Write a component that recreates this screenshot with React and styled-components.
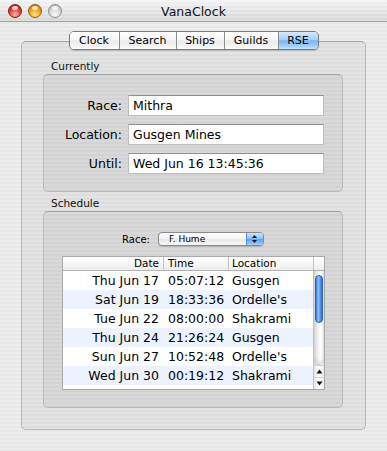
import React from 'react';
import styled, { createGlobalStyle } from 'styled-components';

const GlobalStyle = createGlobalStyle`
  body {
    margin: 0;
    font-family: "DejaVu Sans", "Lucida Grande", sans-serif;
  }
`;

const stripes = 'repeating-linear-gradient(180deg, #eeeeee 0px, #eeeeee 2px, #e7e7e7 2px, #e7e7e7 4px)';

// last row only shows a sliver at the bottom, so it stays empty
const rows = [
    ['Thu Jun 17', '05:07:12', 'Gusgen'],
    ['Sat Jun 19', '18:33:36', "Ordelle's"],
    ['Tue Jun 22', '08:00:00', 'Shakrami'],
    ['Thu Jun 24', '21:26:24', 'Gusgen'],
    ['Sun Jun 27', '10:52:48', "Ordelle's"],
    ['Wed Jun 30', '00:19:12', 'Shakrami'],
    ['', '', ''],
];

const tabs = [
    { label: 'Clock', w: 49 },
    { label: 'Search', w: 57 },
    { label: 'Ships', w: 48 },
    { label: 'Guilds', w: 54 },
    { label: 'RSE', w: 40, active: true },
];

function App() {
    return (
        <>
            <GlobalStyle />
            <Window>
                <TitleBar>
                    <Lights>
                        <Light $c="red" />
                        <Light $c="orange" />
                        <Light $c="gray" />
                    </Lights>
                    <Title>VanaClock</Title>
                    <div />
                </TitleBar>

                <TabBar>
                    <Segmented>
                        {tabs.map((t, i) => (
                            <Tab key={t.label} $w={t.w} $active={t.active} $first={i === 0}>
                                {t.label}
                            </Tab>
                        ))}
                    </Segmented>
                </TabBar>

                <TabBox>
                    <GroupLabel>Currently</GroupLabel>
                    <GroupBox $h={118}>
                        <Form>
                            <FieldLabel>Race:</FieldLabel>
                            <Field>Mithra</Field>
                            <FieldLabel>Location:</FieldLabel>
                            <Field>Gusgen Mines</Field>
                            <FieldLabel>Until:</FieldLabel>
                            <Field>Wed Jun 16 13:45:36</Field>
                        </Form>
                    </GroupBox>

                    <GroupLabel $top={5}>Schedule</GroupLabel>
                    <GroupBox $h={197}>
                        <PopupRow>
                            <PopupLabel>Race:</PopupLabel>
                            <Popup>
                                <PopupText>F. Hume</PopupText>
                                <PopupArrows>
                                    <svg width="7" height="10" viewBox="0 0 7 10">
                                        <path d="M3.5 1 L6 4 L1 4 Z" fill="#1a1a1a" />
                                        <path d="M3.5 9 L6 6 L1 6 Z" fill="#1a1a1a" />
                                    </svg>
                                </PopupArrows>
                            </Popup>
                        </PopupRow>

                        <Table>
                            <Header>
                                <HeadCell $w={101} $right>Date</HeadCell>
                                <HeadCell $w={65} $pl={4}>Time</HeadCell>
                                <HeadCell $w={85} $pl={3}>Location</HeadCell>
                                <HeadCorner />
                            </Header>
                            <Body>
                                <Rows>
                                    {rows.map((r, i) => (
                                        <Row key={i} $alt={i % 2 === 1}>
                                            <Cell $w={101} $right>{r[0]}</Cell>
                                            <Cell $w={65} $pl={4}>{r[1]}</Cell>
                                            <Cell $w={84} $pl={3}>{r[2]}</Cell>
                                        </Row>
                                    ))}
                                </Rows>
                                <Scroller>
                                    <Track>
                                        <Thumb />
                                    </Track>
                                    <ArrowButton>
                                        <svg width="7" height="5" viewBox="0 0 7 5">
                                            <path d="M3.5 0.5 L6.5 4.5 L0.5 4.5 Z" fill="#111" />
                                        </svg>
                                    </ArrowButton>
                                    <ArrowButton>
                                        <svg width="7" height="5" viewBox="0 0 7 5">
                                            <path d="M3.5 4.5 L6.5 0.5 L0.5 0.5 Z" fill="#111" />
                                        </svg>
                                    </ArrowButton>
                                </Scroller>
                            </Body>
                        </Table>
                    </GroupBox>
                </TabBox>
            </Window>
        </>
    );
}

export default App;

const Window = styled.div`
    width: 387px;
    height: 451px;
    overflow: hidden;
    background: ${stripes};
    color: #000;
`;

const TitleBar = styled.div`
    height: 21px;
    border-bottom: 1px solid #a3a3a3;
    display: grid;
    grid-template-columns: 1fr auto 1fr;
    align-items: center;
    background:
        repeating-linear-gradient(180deg, rgba(255,255,255,0.25) 0 2px, rgba(0,0,0,0) 2px 4px),
        linear-gradient(180deg, #f2f2f2 0%, #e2e2e2 55%, #d6d6d6 100%);
`;

const Lights = styled.div`
    display: flex;
    gap: 6px;
    padding-left: 8px;
    padding-top: 1px;
`;

const lightColors = {
    red: ['#ffb4a4', '#e2463a', '#a11a12', '#7d1d16'],
    orange: ['#ffe38c', '#f2a514', '#b86a00', '#8c5a12'],
    gray: ['#fafafa', '#d9d9d9', '#a9a9a9', '#8c8c8c'],
};

const Light = styled.div`
    position: relative;
    width: 14px;
    height: 14px;
    box-sizing: border-box;
    border-radius: 50%;
    border: 1px solid ${(p) => lightColors[p.$c][3]};
    background: radial-gradient(circle at 50% 80%, ${(p) => lightColors[p.$c][0]} 0%, ${(p) => lightColors[p.$c][1]} 50%, ${(p) => lightColors[p.$c][2]} 100%);

    &::after {
        content: '';
        position: absolute;
        left: 3px;
        top: 1px;
        width: 6px;
        height: 4px;
        border-radius: 50%;
        background: rgba(255, 255, 255, 0.75);
    }
`;

const Title = styled.div`
    font-size: 12.5px;
    color: #111;
    padding-top: 1px;
`;

const TabBar = styled.div`
    position: relative;
    z-index: 1;
    display: flex;
    justify-content: center;
    margin: 9px 0 -9px;
`;

const Segmented = styled.div`
    display: flex;
    height: 17px;
    border: 1px solid #7b7b7b;
    border-radius: 5px;
    overflow: hidden;
    box-shadow: 0 1px 1px rgba(0, 0, 0, 0.18);
`;

const Tab = styled.div`
    width: ${(p) => p.$w}px;
    box-sizing: border-box;
    border-left: ${(p) => (p.$first ? 'none' : '1px solid #8e8e8e')};
    display: flex;
    align-items: center;
    justify-content: center;
    font-size: 11px;
    color: #000;
    background: ${(p) =>
        p.$active
            ? 'linear-gradient(180deg, #d4eafe 0%, #a6d0f8 45%, #7cb7f2 52%, #9ccbf8 80%, #c4e4ff 100%)'
            : 'linear-gradient(180deg, #ffffff 0%, #f6f6f6 45%, #ebebeb 52%, #f2f2f2 80%, #fdfdfd 100%)'};
`;

const TabBox = styled.div`
    height: 389px;
    box-sizing: border-box;
    margin: 0 21px;
    padding: 18px 0 0 21px;
    border: 1px solid #b7b7b7;
    border-top-color: #a4a4a4;
    border-radius: 5px;
    background: rgba(0, 0, 0, 0.045);
`;

const GroupLabel = styled.div`
    font-size: 10.5px;
    line-height: 13px;
    margin: ${(p) => p.$top || 0}px 0 1px 8px;
    color: #111;
`;

const GroupBox = styled.div`
    width: 300px;
    height: ${(p) => p.$h}px;
    box-sizing: border-box;
    border: 1px solid #b9b9b9;
    border-top-color: #a3a3a3;
    border-radius: 5px;
    background: rgba(0, 0, 0, 0.045);
`;

const Form = styled.div`
    display: grid;
    grid-template-columns: 78px 196px;
    column-gap: 6px;
    row-gap: 8px;
    padding-top: 20px;
`;

const FieldLabel = styled.div`
    font-size: 12.5px;
    line-height: 21px;
    text-align: right;
`;

const Field = styled.div`
    height: 21px;
    box-sizing: border-box;
    background: #fff;
    border: 1px solid #bdbdbd;
    border-top-color: #8f8f8f;
    padding-left: 4px;
    font-size: 12.5px;
    line-height: 19px;
`;

const PopupRow = styled.div`
    display: flex;
    justify-content: center;
    align-items: center;
    gap: 8px;
    padding-top: 20px;
`;

const PopupLabel = styled.div`
    font-size: 10px;
`;

const Popup = styled.div`
    width: 106px;
    height: 14px;
    box-sizing: border-box;
    display: flex;
    border: 1px solid #8a8a8a;
    border-radius: 4px;
    overflow: hidden;
    background: linear-gradient(180deg, #ffffff 0%, #f4f4f4 50%, #e8e8e8 55%, #f6f6f6 100%);
    box-shadow: 0 1px 1px rgba(0, 0, 0, 0.15);
`;

const PopupText = styled.div`
    flex: 1;
    font-size: 9px;
    line-height: 12px;
    padding-left: 10px;
`;

const PopupArrows = styled.div`
    width: 16px;
    display: flex;
    align-items: center;
    justify-content: center;
    border-left: 1px solid #5a8fd8;
    background: linear-gradient(180deg, #cbe5fd 0%, #8fc3f6 45%, #5ea4ee 55%, #9fd0fb 100%);
`;

const Table = styled.div`
    width: 263px;
    box-sizing: border-box;
    margin: 10px 0 0 18px;
    border: 1px solid #a9a9a9;
    background: #fff;
`;

const Header = styled.div`
    display: flex;
    height: 14px;
    box-sizing: border-box;
    border-bottom: 1px solid #b3b3b3;
    background: linear-gradient(180deg, #ffffff 0%, #f7f7f7 50%, #ececec 100%);
`;

const HeadCell = styled.div`
    width: ${(p) => p.$w}px;
    box-sizing: border-box;
    border-right: 1px solid #c3c3c3;
    font-size: 10.5px;
    line-height: 13px;
    text-align: ${(p) => (p.$right ? 'right' : 'left')};
    padding: ${(p) => (p.$right ? '0 4px 0 0' : `0 0 0 ${p.$pl}px`)};
`;

const HeadCorner = styled.div`
    flex: 1;
`;

const Body = styled.div`
    display: flex;
    height: 118px;
    overflow: hidden;
`;

const Rows = styled.div`
    width: 250px;
`;

const Row = styled.div`
    display: flex;
    height: 19px;
    background: ${(p) => (p.$alt ? '#edf3fe' : '#ffffff')};
`;

const Cell = styled.div`
    width: ${(p) => p.$w}px;
    box-sizing: border-box;
    font-size: 12.5px;
    line-height: 19px;
    white-space: nowrap;
    text-align: ${(p) => (p.$right ? 'right' : 'left')};
    padding: ${(p) => (p.$right ? '0 5px 0 0' : `0 0 0 ${p.$pl}px`)};
`;

const Scroller = styled.div`
    width: 11px;
    box-sizing: border-box;
    border-left: 1px solid #c2c2c2;
    display: flex;
    flex-direction: column;
    background: linear-gradient(90deg, #d6d6d6 0%, #f4f4f4 45%, #ffffff 70%, #e4e4e4 100%);
`;

const Track = styled.div`
    flex: 1;
    padding: 4px 1px 0;
    border-bottom: 1px solid #c8c8c8;
    border-radius: 0 0 5px 5px;
    box-shadow: inset 0 -3px 3px rgba(0, 0, 0, 0.08);
`;

const Thumb = styled.div`
    height: 48px;
    box-sizing: border-box;
    border: 1px solid #2f64bd;
    border-radius: 5px;
    background: linear-gradient(90deg, #2f6fd6 0%, #8cc4fb 35%, #6aa8f0 60%, #2b68cf 100%);
`;

const ArrowButton = styled.div`
    height: 12px;
    box-sizing: border-box;
    display: flex;
    align-items: center;
    justify-content: center;
    border-top: 1px solid #d2d2d2;
    background: linear-gradient(90deg, #e6e6e6 0%, #ffffff 50%, #ececec 100%);
`;
